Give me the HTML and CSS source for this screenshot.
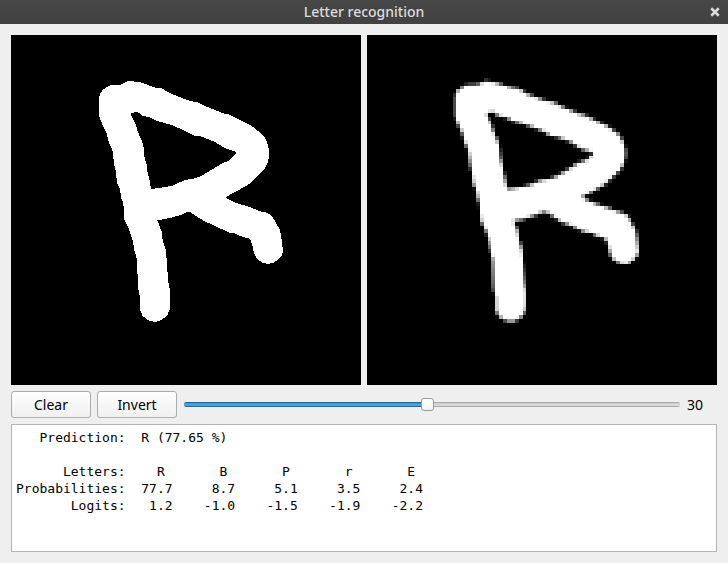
FILE: index.html
```html
<!DOCTYPE html>
<html lang="en">
<head>
<meta charset="utf-8">
<title>Letter recognition</title>
<link rel="stylesheet" href="styles.css">
</head>
<body>
<header class="titlebar">
  <h1 class="title">Letter recognition</h1>
  <button class="close" type="button" aria-label="Close">
    <svg class="close-icon" viewBox="0 0 8 8" aria-hidden="true"><path d="M1 1L7 7M7 1L1 7"/></svg>
  </button>
</header>
<main class="content">
  <div class="boards">
    <svg class="board" viewBox="-207 -105 1050 1050" role="img" aria-label="Drawing">
      <path id="stroke" class="stroke" fill-rule="evenodd" d="M58 80L62 68L70 58L92 45L122 44L140 35L150 33L183 37L225 53L245 55L275 72L330 93L350 96L375 108L430 130L445 133L515 168L550 196L561 216L567 238L567 260L562 282L552 300L505 344L458 370L436 382L465 398L510 411L540 424L560 428L576 438L588 459L600 480L605 510L609 545L606 555L597 567L580 579L563 582L545 577L530 565L522 550L518 530L513 513L505 505L483 499L465 490L445 487L400 465L375 455L340 433L330 426L320 426L300 436L265 445L232 451L245 485L248 510L258 540L262 600L266 645L270 660L270 715L262 736L243 751L225 756L205 751L188 738L180 720L180 680L174 655L171 570L163 540L158 510L148 480L133 450L130 400L124 385L120 357L111 340L108 305L103 285L97 240L86 215L80 190L68 165L58 140Z
      M151 129L172 126L188 137L215 144L225 151L275 165L320 185L343 197L365 200L405 216L435 235L465 244L470 250L450 270L425 281L385 305L362 319L340 326L315 330L275 348L215 357L211 345L207 323L203 310L200 285L194 265L190 225L185 210L173 185L168 165L158 145Z"/>
    </svg>
    <canvas class="board board-sampled" id="sampled" width="90" height="90" role="img" aria-label="Network input"></canvas>
  </div>
  <div class="controls">
    <button class="button" type="button">Clear</button>
    <button class="button" type="button">Invert</button>
    <input class="slider" id="pen" type="range" min="1" max="60" value="30" aria-label="Pen width">
    <output class="value" id="pen-value" for="pen">30</output>
  </div>
  <textarea class="report" readonly aria-label="Prediction report">
   Prediction:  R (77.65 %)

      Letters:    R       B       P       r       E
Probabilities:  77.7     8.7     5.1     3.5     2.4
       Logits:   1.2    -1.0    -1.5    -1.9    -2.2</textarea>
</main>
<script src="app.js"></script>
</body>
</html>
```
FILE: styles.css
```css
* {
  box-sizing: border-box;
}

body {
  margin: 0;
  min-height: 100vh;
  display: flex;
  flex-direction: column;
  background: #efefef;
  color: #000;
  font: 14px/20px "Noto Sans", sans-serif;
}

.titlebar {
  display: grid;
  grid-template-columns: 1fr auto 1fr;
  align-items: center;
  height: 24px;
  padding: 0 8px;
  background: linear-gradient(#474747, #414141);
  color: #dcdcdc;
}

.title {
  grid-column: 2;
  margin: 0;
  font-size: 14px;
  font-weight: 500;
}

.close {
  justify-self: end;
  display: flex;
  padding: 0;
  border: 0;
  background: none;
}

.close-icon {
  width: 10px;
  height: 10px;
  fill: none;
  stroke: #dcdcdc;
  stroke-width: 2;
}

.content {
  flex: 1;
  display: flex;
  flex-direction: column;
  gap: 6px;
  padding: 11px;
}

.boards {
  display: grid;
  grid-template-columns: 1fr 1fr;
  gap: 6px;
}

.board {
  display: block;
  width: 100%;
  aspect-ratio: 1;
  background: #000;
}

.board-sampled {
  image-rendering: pixelated;
}

.stroke {
  fill: #fff;
  shape-rendering: crispEdges;
}

.controls {
  display: flex;
  align-items: center;
  gap: 6px;
}

.button {
  width: 80px;
  height: 27px;
  padding: 0;
  border: 1px solid #acacac;
  border-radius: 3px;
  background: linear-gradient(#fefefe, #f0f0f0);
  color: #000;
  font: inherit;
}

.slider {
  --fill: 50%;
  flex: 1;
  min-width: 0;
  height: 15px;
  margin: 0 0 0 1px;
  appearance: none;
  background: none;
}

.slider::-webkit-slider-runnable-track {
  height: 5px;
  border-radius: 2px;
  background:
    linear-gradient(#27658f 1px, #3a9bdc 1px, #4aa9e6 4px, #27658f 4px) 0 0 / var(--fill) 100% no-repeat,
    linear-gradient(#a8a8a8 1px, #cdcdcd 1px, #dedede 4px, #a8a8a8 4px);
}

.slider::-webkit-slider-thumb {
  appearance: none;
  width: 13px;
  height: 13px;
  margin-top: -4px;
  border: 1px solid #999;
  border-radius: 3px;
  background: linear-gradient(#fff, #f2f2f2);
}

.value {
  width: 31px;
  padding-left: 1px;
}

.report {
  flex: 1;
  display: block;
  width: 100%;
  min-height: 96px;
  padding: 4px;
  border: 1px solid #b4b4b4;
  border-radius: 0;
  outline: 0;
  resize: none;
  background: #fff;
  color: #000;
  font: 13px/17px "DejaVu Sans Mono", monospace;
}
```
FILE: app.js
```js
const slider = document.getElementById('pen');
const value = document.getElementById('pen-value');

function updateSlider() {
  const part = (slider.value - slider.min) / (slider.max - slider.min);
  slider.style.setProperty('--fill', `${part * 100}%`);
  value.textContent = slider.value;
}
slider.addEventListener('input', updateSlider);
updateSlider();

// Draw the stroke at the network's input resolution.
const canvas = document.getElementById('sampled');
const context = canvas.getContext('2d');
const outline = document.getElementById('stroke').getAttribute('d');
context.scale(90 / 1050, 90 / 1050);
context.translate(207, 105);
context.fillStyle = '#fff';
context.fill(new Path2D(outline), 'evenodd');
```
